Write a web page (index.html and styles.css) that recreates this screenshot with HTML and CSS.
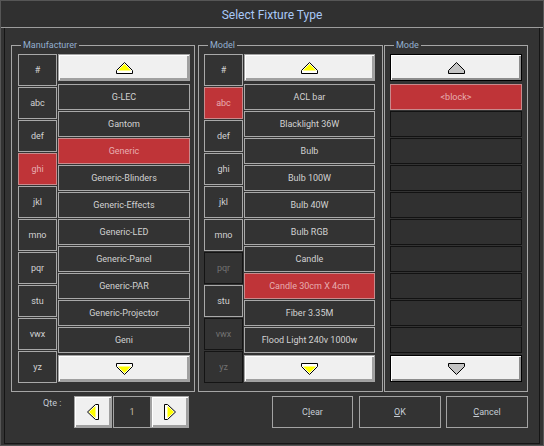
FILE: index.html
```html
<!DOCTYPE html>
<html>
<head>
<meta charset="utf-8">
<link rel="stylesheet" href="styles.css">
</head>
<body>
<div class="window">
  <div class="titlebar">Select Fixture Type</div>
  <div class="client">
    <div class="groups">
      <div class="group g-manu">
        <span class="legend">Manufacturer</span>
        <div class="letters">
          <div class="key">#</div>
          <div class="key">abc</div>
          <div class="key">def</div>
          <div class="key sel">ghi</div>
          <div class="key">jkl</div>
          <div class="key">mno</div>
          <div class="key">pqr</div>
          <div class="key">stu</div>
          <div class="key">vwx</div>
          <div class="key">yz</div>
        </div>
        <div class="list">
          <div class="abtn up"><svg width="17" height="12" viewBox="0 0 17 12"><path d="M0.5 11.5V8.5L8.5 0.5L16.5 8.5V11.5Z" fill="#fff" stroke="#000"/><path d="M2 8.5L8.5 2L15 8.5Z" fill="#ffff00"/></svg></div>
          <div class="items">
            <div class="item">G-LEC</div>
            <div class="item">Gantom</div>
            <div class="item sel">Generic</div>
            <div class="item">Generic-Blinders</div>
            <div class="item">Generic-Effects</div>
            <div class="item">Generic-LED</div>
            <div class="item">Generic-Panel</div>
            <div class="item">Generic-PAR</div>
            <div class="item">Generic-Projector</div>
            <div class="item">Geni</div>
          </div>
          <div class="abtn down"><svg width="17" height="12" viewBox="0 0 17 12"><path d="M0.5 0.5V3.5L8.5 11.5L16.5 3.5V0.5Z" fill="#fff" stroke="#000"/><path d="M2 3.5L8.5 10L15 3.5Z" fill="#ffff00"/></svg></div>
        </div>
      </div>
      <div class="group g-model">
        <span class="legend">Model</span>
        <div class="letters">
          <div class="key">#</div>
          <div class="key sel">abc</div>
          <div class="key">def</div>
          <div class="key">ghi</div>
          <div class="key">jkl</div>
          <div class="key">mno</div>
          <div class="key off">pqr</div>
          <div class="key">stu</div>
          <div class="key off">vwx</div>
          <div class="key off">yz</div>
        </div>
        <div class="list">
          <div class="abtn up"><svg width="17" height="12" viewBox="0 0 17 12"><path d="M0.5 11.5V8.5L8.5 0.5L16.5 8.5V11.5Z" fill="#fff" stroke="#000"/><path d="M2 8.5L8.5 2L15 8.5Z" fill="#ffff00"/></svg></div>
          <div class="items">
            <div class="item">ACL bar</div>
            <div class="item">Blacklight 36W</div>
            <div class="item">Bulb</div>
            <div class="item">Bulb 100W</div>
            <div class="item">Bulb 40W</div>
            <div class="item">Bulb RGB</div>
            <div class="item">Candle</div>
            <div class="item sel">Candle 30cm X 4cm</div>
            <div class="item">Fiber 3.35M</div>
            <div class="item">Flood Light 240v 1000w</div>
          </div>
          <div class="abtn down"><svg width="17" height="12" viewBox="0 0 17 12"><path d="M0.5 0.5V3.5L8.5 11.5L16.5 3.5V0.5Z" fill="#fff" stroke="#000"/><path d="M2 3.5L8.5 10L15 3.5Z" fill="#ffff00"/></svg></div>
        </div>
      </div>
      <div class="group g-mode">
        <span class="legend">Mode</span>
        <div class="list">
          <div class="abtn up dark"><svg width="17" height="12" viewBox="0 0 17 12"><path d="M0.5 11.5V8.5L8.5 0.5L16.5 8.5V11.5Z" fill="#c3c3c3" stroke="#000"/></svg></div>
          <div class="items">
            <div class="item sel">&lt;block&gt;</div>
            <div class="item empty"></div>
            <div class="item empty"></div>
            <div class="item empty"></div>
            <div class="item empty"></div>
            <div class="item empty"></div>
            <div class="item empty"></div>
            <div class="item empty"></div>
            <div class="item empty"></div>
            <div class="item empty"></div>
          </div>
          <div class="abtn down dark"><svg width="17" height="12" viewBox="0 0 17 12"><path d="M0.5 0.5V3.5L8.5 11.5L16.5 3.5V0.5Z" fill="#c3c3c3" stroke="#000"/></svg></div>
        </div>
      </div>
    </div>
    <div class="bottom">
      <span class="qte-label">Qte :</span>
      <div class="qte">
        <div class="abtn side"><svg width="12" height="16" viewBox="0 0 12 16"><path d="M11.5 0.5H8.5L0.5 8L8.5 15.5H11.5Z" fill="#fff" stroke="#000"/><path d="M8.5 2L2 8L8.5 14Z" fill="#ffff00"/></svg></div>
        <div class="qty">1</div>
        <div class="abtn side"><svg width="12" height="16" viewBox="0 0 12 16"><path d="M0.5 0.5H3.5L11.5 8L3.5 15.5H0.5Z" fill="#fff" stroke="#000"/><path d="M3.5 2L10 8L3.5 14Z" fill="#ffff00"/></svg></div>
      </div>
      <div class="actions">
        <div class="btn b-clear">C<u>l</u>ear</div>
        <div class="btn b-ok"><u>O</u>K</div>
        <div class="btn b-cancel"><u>C</u>ancel</div>
      </div>
    </div>
  </div>
</div>
</body>
</html>
```
FILE: styles.css
```css
html, body {
  margin: 0;
  padding: 0;
  background: #333333;
}
body {
  font-family: Roboto, "Liberation Sans", sans-serif;
  font-size: 9px;
  color: #cfcfcf;
}
.window {
  width: 544px;
  height: 446px;
  box-sizing: border-box;
  border: 1px solid #565656;
  padding: 0 3px 1px 3px;
  background: #333333;
  display: flex;
  flex-direction: column;
  overflow: hidden;
}
.titlebar {
  height: 24px;
  padding-top: 2px;
  line-height: 24px;
  margin: 0 -3px;
  text-align: center;
  font-size: 12px;
  color: #a9c9f7;
  background: #303030;
  border-bottom: 1px solid #9c9c9c;
}
.client {
  flex: 1;
  border: 1px solid #151515;
  border-top: none;
  padding: 17px 0 0 6px;
  display: flex;
  flex-direction: column;
}
.groups {
  display: flex;
  height: 347px;
}
.group {
  position: relative;
  box-sizing: border-box;
  height: 347px;
  border: 1px solid #a6a6a6;
  padding-top: 8px;
  display: flex;
}
.g-manu { width: 184px; padding-left: 6px; margin-right: 3px; }
.g-model { width: 185px; padding-left: 5px; margin-right: 1px; }
.g-mode { width: 144px; padding-left: 5px; }
.legend {
  position: absolute;
  top: -7px;
  left: 9px;
  padding: 0 2px;
  line-height: 12px;
  background: #333333;
  color: #93afd0;
}
.letters {
  display: flex;
  flex-direction: column;
  gap: 1px;
  width: 39px;
  margin-right: 1px;
}
.key {
  height: 32px;
  box-sizing: border-box;
  border: 1px solid #a9a9a9;
  display: flex;
  align-items: center;
  justify-content: center;
  color: #d2d2d2;
}
.key.sel, .item.sel {
  background: #bf3438;
  border-color: #c98a8c;
  color: #e7aeb1;
}
.key.off {
  border-color: #141414;
  color: #727272;
}
.list {
  display: flex;
  flex-direction: column;
  width: 132px;
}
.g-model .list { width: 131px; }
.abtn {
  box-sizing: border-box;
  height: 27px;
  background: #f0f0f0;
  border: 1px solid #a3a3a3;
  box-shadow: inset 1px 1px 0 #ffffff, inset -2px -2px 0 #a0a0a0;
  display: flex;
  align-items: center;
  justify-content: center;
}
.abtn.dark {
  border-color: #000000;
  box-shadow: inset 1px 1px 0 #ffffff, inset -2px -2px 0 #8c8c8c;
}
.abtn.up { margin-bottom: 3px; }
.abtn.down { margin-top: 2px; }
.items {
  display: flex;
  flex-direction: column;
  gap: 1px;
}
.item {
  height: 26px;
  box-sizing: border-box;
  border: 1px solid #a9a9a9;
  display: flex;
  align-items: center;
  justify-content: center;
  white-space: nowrap;
  color: #d2d2d2;
}
.item.empty {
  border-color: #121212;
  background: #303030;
}
.bottom {
  display: flex;
  margin-top: 4px;
  height: 32px;
  padding-right: 11px;
}
.qte-label {
  width: 31px;
  margin-left: 32px;
  line-height: 14px;
  color: #c3cbd4;
}
.qte {
  display: flex;
}
.abtn.side {
  width: 38px;
  height: 32px;
}
.qty {
  box-sizing: border-box;
  width: 38px;
  height: 32px;
  margin-left: 1px;
  border: 1px solid #a3a3a3;
  display: flex;
  align-items: center;
  justify-content: center;
  color: #c8b8a4;
}
.actions {
  margin-left: auto;
  display: flex;
}
.btn {
  box-sizing: border-box;
  height: 32px;
  border: 1px solid #a3a3a3;
  display: flex;
  align-items: center;
  justify-content: center;
  color: #c5ccd4;
}
.btn u { text-underline-offset: 1px; }
.b-clear { width: 81px; }
.b-ok { width: 82px; margin-left: 6px; }
.b-cancel { width: 82px; margin-left: 5px; }
```
